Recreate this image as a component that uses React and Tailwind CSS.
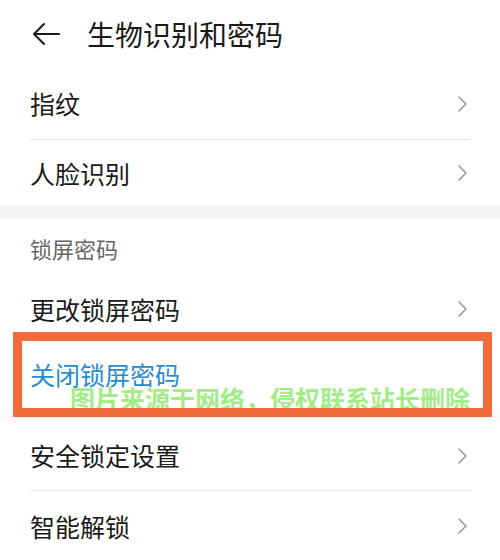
import React from "react";

const font = { fontFamily: '"Noto Sans CJK SC", "Noto Sans", sans-serif' };

function Chevron() {
  return (
    <svg width="12" height="18" viewBox="0 0 12 18" className="mr-[32px]">
      <path d="M3 2 L10 9 L3 16" fill="none" stroke="#9a9a9a" strokeWidth="1.6" strokeLinecap="round" strokeLinejoin="round" />
    </svg>
  );
}

function Row({ label, h, color = "text-[#1a1a1a]", arrow = true }) {
  return (
    <div className={`flex items-center justify-between pl-[30px] ${h}`}>
      <span className={`text-[25px] leading-none ${color}`}>{label}</span>
      {arrow && <Chevron />}
    </div>
  );
}

function Divider() {
  return <div className="mx-[30px] h-px bg-[#e6e6e6]" />;
}

export default function App() {
  return (
    <div className="relative w-[500px] h-[560px] overflow-hidden bg-white" style={font}>
      {/* header */}
      <div className="flex items-center h-[68px]">
        <svg width="30" height="24" viewBox="0 0 30 24" className="ml-[31px]">
          <path d="M13 2 L3 12 L13 22 M3 12 L28 12" fill="none" stroke="#1a1a1a" strokeWidth="2" strokeLinecap="round" strokeLinejoin="round" />
        </svg>
        <span className="ml-[26px] text-[28px] leading-none text-[#1a1a1a]">生物识别和密码</span>
      </div>

      <Row label="指纹" h="h-[71px]" />
      <Divider />
      <Row label="人脸识别" h="h-[66px]" />

      <div className="h-[12px] bg-[#f4f4f4]" />

      <div className="flex items-center pl-[30px] h-[60px]">
        <span className="text-[22px] leading-none text-[#666666]">锁屏密码</span>
      </div>

      <Row label="更改锁屏密码" h="h-[62px]" />
      <Row label="关闭锁屏密码" h="h-[69px]" color="text-[#2a8bd0]" arrow={false} />
      <div className="h-[12px] bg-[#fafafa]" />
      <Row label="安全锁定设置" h="h-[69px]" />
      <Divider />
      <Row label="智能解锁" h="h-[70px]" />

      {/* watermark */}
      <div className="absolute left-[70px] top-[386px] z-0 text-[25px] leading-none font-bold text-[#a4ec88] whitespace-nowrap">
        图片来源于网络，侵权联系站长删除
      </div>

      {/* highlight frame */}
      <div className="absolute left-[13px] top-[332px] w-[479px] h-[85px] z-10 border-[9px] border-[#f26c3b]" />
    </div>
  );
}
